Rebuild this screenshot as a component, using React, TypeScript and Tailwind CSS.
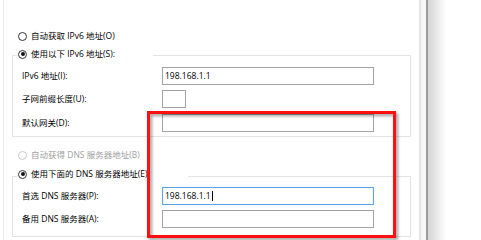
import React from "react";

const font = { fontFamily: '"Open Sans", "Noto Sans CJK SC", sans-serif' };

function Radio({ checked, disabled }: { checked?: boolean; disabled?: boolean }) {
  return (
    <span
      className={
        "flex h-[9px] w-[9px] shrink-0 items-center justify-center rounded-full border bg-white " +
        (disabled ? "border-[#c9c9c9]" : "border-[#333333]")
      }
    >
      {checked && <span className="block h-[4px] w-[4px] rounded-full bg-[#111111]" />}
    </span>
  );
}

function Row({ label, children, mt }: { label: string; children: React.ReactNode; mt: string }) {
  return (
    <div className={"flex h-[18px] items-center pl-[9px] " + mt}>
      <span className="w-[140px] shrink-0 text-[8.5px] leading-none text-black">{label}</span>
      {children}
    </div>
  );
}

function Input({ value, w = "w-[212px]", focused, cursor }: { value?: string; w?: string; focused?: boolean; cursor?: boolean }) {
  return (
    <div
      className={
        "flex h-[18px] items-center border bg-white pl-[2px] text-[8.5px] leading-none text-black " +
        w +
        " " +
        (focused ? "border-[#5aa2e6]" : "border-[#a3a3a3]")
      }
    >
      {value && <span>{value}</span>}
      {cursor && <span className="ml-[1px] block h-[10px] w-[1px] bg-black" />}
    </div>
  );
}

export default function App() {
  return (
    <div className="relative flex h-[240px] w-[481px] overflow-hidden bg-white" style={font}>
      <div className="ml-[3px] h-full w-[416px] shrink-0 border-l border-[#ececec] pt-[29px]">
        <div className="flex h-[14px] items-center gap-[4px] pl-[14px]">
          <Radio />
          <span className="text-[8.5px] leading-none text-black">自动获取 IPv6 地址(O)</span>
        </div>

        <div className="ml-[8px] mt-[12px] w-[399px] border border-[#e3e3e3] pb-[4px]">
          <div className="-mt-[9px] ml-[4px] flex h-[14px] w-[136px] items-center gap-[4px] bg-white pl-[1px]">
            <Radio checked />
            <span className="text-[8.5px] leading-none text-black">使用以下 IPv6 地址(S):</span>
          </div>
          <Row label="IPv6 地址(I):" mt="mt-[6px]">
            <Input value="198.168.1.1" />
          </Row>
          <Row label="子网前缀长度(U):" mt="mt-[5px]">
            <Input w="w-[24px]" />
          </Row>
          <Row label="默认网关(D):" mt="mt-[6px]">
            <Input />
          </Row>
        </div>

        <div className="mt-[11px] flex h-[14px] items-center gap-[4px] pl-[14px]">
          <Radio disabled />
          <span className="text-[8.5px] leading-none text-[#a0a0a0]">自动获得 DNS 服务器地址(B)</span>
        </div>

        <div className="ml-[8px] mt-[14px] w-[399px] border border-[#e3e3e3] pb-[8px]">
          <div className="-mt-[10px] ml-[4px] flex h-[14px] w-[171px] items-center gap-[4px] bg-white pl-[1px]">
            <Radio checked />
            <span className="text-[8.5px] leading-none text-black">使用下面的 DNS 服务器地址(E):</span>
          </div>
          <Row label="首选 DNS 服务器(P):" mt="mt-[6px]">
            <Input value="198.168.1.1" focused cursor />
          </Row>
          <Row label="备用 DNS 服务器(A):" mt="mt-[5px]">
            <Input />
          </Row>
        </div>
      </div>

      <div className="h-full w-[2px] shrink-0 bg-[#e4e4e4]" />
      <div className="h-full w-[5px] shrink-0 bg-[#f6f6f6]" />
      <div className="h-full w-[2px] shrink-0 bg-[#9c9c9c]" />
      <div className="h-full w-[18px] shrink-0 bg-gradient-to-r from-[#d4d4d4] to-white" />
      <div className="h-full flex-1 bg-white" />

      <div className="absolute left-[147px] top-[111px] h-[127px] w-[249px] border-[3px] border-[#ff1010] drop-shadow-[2px_2px_1.5px_rgba(0,0,0,0.4)]" />
    </div>
  );
}
